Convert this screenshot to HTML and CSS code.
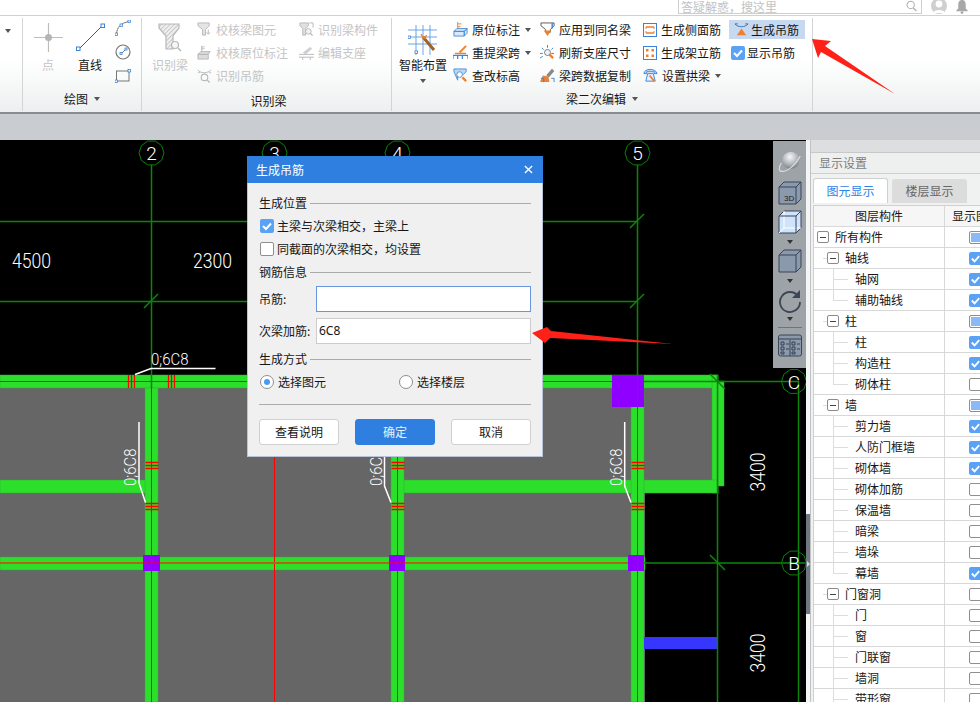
FILE: index.html
```html
<!DOCTYPE html>
<html lang="zh">
<head>
<meta charset="utf-8">
<title>生成吊筋</title>
<link rel="stylesheet" href="styles.css">
</head>
<body>
<div class="app">
  <header class="topbar">
    <div class="search"><span class="search-text">答疑解惑，搜这里</span>
      <svg class="i16" viewBox="0 0 16 16"><circle cx="7" cy="6" r="4.5" fill="none" stroke="#b0b0b0" stroke-width="1.3"/><path d="M10 9.5l4 4" stroke="#b0b0b0" stroke-width="1.6"/></svg>
    </div>
    <svg class="avatar" viewBox="0 0 16 15"><circle cx="8" cy="6" r="8" fill="#cfcfcf"/><circle cx="8" cy="4" r="3.4" fill="#fff"/><path d="M2 13c1-4 11-4 12 0z" fill="#fff"/></svg>
    <svg class="bell" viewBox="0 0 14 15"><path d="M7 0c3 0 4 2.500 4 5v4l2 2v1H1v-1l2-2V5c0-2.500 1-5 4-5z" fill="#a8a8a8"/><circle cx="7" cy="13.500" r="1.500" fill="#a8a8a8"/></svg>
  </header>

  <section class="ribbon">
    <div class="group g-first"><span class="caret first-caret"></span></div>

    <div class="group g-draw">
      <div class="group-body">
        <div class="big w30 ml10">
          <svg class="bigicon" viewBox="0 0 29 29"><path d="M14.500 0v29M0 14.500h29" stroke="#bdbdbd" stroke-width="1.200"/><circle cx="14.500" cy="14.500" r="3.500" fill="#b5b5b5"/></svg>
          <span class="off">点</span>
        </div>
        <div class="big w30 ml12">
          <svg class="bigicon" viewBox="0 0 29 29"><path d="M3 26L26 3" stroke="#555" stroke-width="1"/><rect x="0.500" y="24" width="3.500" height="3.500" fill="#fff" stroke="#3b82d8"/><rect x="25" y="1" width="3.500" height="3.500" fill="#fff" stroke="#3b82d8"/></svg>
          <span>直线</span>
        </div>
        <div class="smalls">
          <svg class="i16" viewBox="0 0 16 16"><path d="M1.500 14C2 7 6 3 14 1.500" fill="none" stroke="#777"/><rect x="0" y="13" width="2.500" height="2.500" fill="#fff" stroke="#3b82d8" stroke-width=".8"/><rect x="5" y="4" width="2.500" height="2.500" fill="#fff" stroke="#3b82d8" stroke-width=".8"/><rect x="13" y="0" width="2.500" height="2.500" fill="#fff" stroke="#3b82d8" stroke-width=".8"/></svg>
          <svg class="i16" viewBox="0 0 16 16"><circle cx="8" cy="8" r="7" fill="none" stroke="#777" stroke-width="1.200"/><path d="M6.500 9.500l4-4" stroke="#777"/><rect x="5" y="8.500" width="2" height="2" fill="#fff" stroke="#3b82d8" stroke-width=".8"/><rect x="10" y="4" width="2" height="2" fill="#fff" stroke="#3b82d8" stroke-width=".8"/></svg>
          <svg class="i16" viewBox="0 0 16 16"><rect x="1.500" y="3" width="12.500" height="10" fill="none" stroke="#777"/><rect x="0" y="12" width="2.500" height="2.500" fill="#fff" stroke="#3b82d8" stroke-width=".8"/><rect x="13" y="1.500" width="2.500" height="2.500" fill="#fff" stroke="#3b82d8" stroke-width=".8"/></svg>
        </div>
      </div>
      <div class="group-label">绘图<span class="caret"></span></div>
    </div>

    <div class="group g-recog">
      <div class="group-body">
        <div class="big w36 ml10">
          <svg class="bigicon recog-icon" viewBox="0 0 24 29">
            <defs><pattern id="hatch" width="3" height="3" patternUnits="userSpaceOnUse" patternTransform="rotate(-45)"><rect width="3" height="3" fill="#f0f0f0"/><rect width="3" height="1" fill="#c8c8c8"/></pattern></defs>
            <path d="M1 1h20v4l-6 8v13H8V13L1 5z" fill="url(#hatch)" stroke="#b8b8b8" stroke-width="1.200"/><circle cx="17" cy="22" r="3.500" fill="#f5f5f5" stroke="#b8b8b8" stroke-width="1.200"/><path d="M20 25l3 3" stroke="#b8b8b8" stroke-width="1.500"/>
          </svg>
          <span class="off">识别梁</span>
        </div>
        <div class="col w102 ml9">
          <div class="item off"><svg class="i15" viewBox="0 0 16 16"><path d="M1 1h12v3l-4 4v6H6V8L1 4z" fill="#e4e4e4" stroke="#b8b8b8"/><path d="M12 8v5l-2-2m2 2l2-2" fill="none" stroke="#b8b8b8"/></svg>校核梁图元</div>
          <div class="item off"><svg class="i15" viewBox="0 0 16 16"><path d="M5 1v6M5 2h3M5 4h3" stroke="#b8b8b8"/><path d="M1 10l3-3h10l-2 3zM1 10h11v5H1z" fill="#dcdcdc" stroke="#b8b8b8"/></svg>校核原位标注</div>
          <div class="item off"><svg class="i15" viewBox="0 0 16 16"><path d="M1 2c2 4 11 4 14 0M1 5h2M13 5h2" fill="none" stroke="#b8b8b8"/><circle cx="8" cy="10" r="3.500" fill="none" stroke="#b8b8b8" stroke-width="1.200"/><path d="M11 13l2.500 2.500" stroke="#b8b8b8" stroke-width="1.400"/></svg>识别吊筋</div>
        </div>
        <div class="col">
          <div class="item off"><svg class="i15" viewBox="0 0 16 16"><path d="M1 1h9v3L7 7v7H4V7L1 4z" fill="#e0e0e0" stroke="#b8b8b8"/><path d="M11 1h4v5" fill="none" stroke="#b8b8b8"/><circle cx="10" cy="10" r="3" fill="#f2f2f2" stroke="#b8b8b8"/><path d="M12 12l2.500 2.500" stroke="#b8b8b8" stroke-width="1.400"/></svg>识别梁构件</div>
          <div class="item off"><svg class="i15" viewBox="0 0 16 16"><path d="M4 8l8-6 2 2-7 6z" fill="#cfcfcf"/><path d="M0 10h16M0 13h16M4 13v3M12 13v3" stroke="#b8b8b8"/></svg>编辑支座</div>
        </div>
      </div>
      <div class="group-label label-low">识别梁</div>
    </div>

    <div class="group g-edit">
      <div class="group-body">
        <div class="big w48 ml7">
          <svg class="smart" viewBox="0 0 30 30"><path d="M0 5h29M0 12h29M0 19h29M8 0v30M15 0v30M22 0v30" stroke="#5b9be0" stroke-width=".9"/><path d="M15 12l11 13" stroke="#a0622a" stroke-width="3"/><path d="M13 9l2 4 3-2-1 3" stroke="#f08030" stroke-width="1.300" fill="none"/><rect x="0" y="11" width="2.500" height="2.500" fill="#fff" stroke="#3b82d8" stroke-width=".8"/><rect x="7" y="26" width="2.500" height="2.500" fill="#fff" stroke="#3b82d8" stroke-width=".8"/></svg>
          <span class="smart-text">智能布置</span>
          <span class="caret smart-caret"></span>
        </div>
        <div class="col w87 ml6">
          <div class="item"><svg class="i15" viewBox="0 0 16 16"><path d="M5 0v8M5 2h4M5 5h3" stroke="#f08030"/><path d="M1 10l3-3h11l-3 3zM1 10h11v5H1zM12 10l3-3v5l-3 3z" fill="#dbe8f8" stroke="#4a8fd8"/></svg>原位标注<span class="caret item-caret"></span></div>
          <div class="item"><svg class="i15" viewBox="0 0 16 16"><path d="M7 8l7-7" stroke="#f08030" stroke-width="2"/><path d="M2 9h12" stroke="#f08030" stroke-width="1.500"/><path d="M0 11h16v4M0 11v4M5 11v4M10 11v4" fill="none" stroke="#3b82d8" stroke-width="1.300"/></svg>重提梁跨<span class="caret item-caret"></span></div>
          <div class="item"><svg class="i15" viewBox="0 0 16 16"><path d="M1 1h13v3l-3 3H5v6L1 4z" fill="#bcd6f4" stroke="#4a8fd8"/><circle cx="7" cy="7" r="3" fill="#fff" stroke="#4a8fd8"/><path d="M10 10l4 4" stroke="#f08030" stroke-width="2.500"/></svg>查改标高</div>
        </div>
        <div class="col w103">
          <div class="item"><svg class="i15" viewBox="0 0 16 16"><path d="M1 1h14v3l-4 4v3H6V8L1 4z" fill="#fff" stroke="#555"/><path d="M4 9h8l-4 6z" fill="#f08030"/><path d="M13 1v6" stroke="#3b82d8" stroke-width="1.500"/></svg>应用到同名梁</div>
          <div class="item"><svg class="i15" viewBox="0 0 16 16"><path d="M8 0v3M2 3l2 2M14 3l-2 2M0 9h3M0 14l3-2M12 9h3" stroke="#3b82d8"/><circle cx="8" cy="8" r="3.200" fill="#eaf2fc" stroke="#777"/><path d="M10 10l4 4" stroke="#f08030" stroke-width="2.500"/></svg>刷新支座尺寸</div>
          <div class="item"><svg class="i15" viewBox="0 0 16 16"><path d="M8 9l6-7" stroke="#888" stroke-width="3.500"/><path d="M3 8l6 1 1 6H0z" fill="#f08030"/><path d="M1 11h3v4M12 11h3v4" fill="none" stroke="#3b82d8"/></svg>梁跨数据复制</div>
        </div>
        <div class="col w86">
          <div class="item tight"><svg class="i14" viewBox="0 0 14 14"><rect x=".5" y=".5" width="13" height="13" fill="#fff" stroke="#3b82d8"/><path d="M3 4h8M3 10h8" stroke="#f08030" stroke-width="1.400"/><path d="M3 4v2M11 4v2M3 10V8M11 10V8" stroke="#f08030"/></svg>生成侧面筋</div>
          <div class="item tight"><svg class="i14" viewBox="0 0 14 14"><rect x=".5" y=".5" width="13" height="13" fill="#fff" stroke="#3b82d8"/><path d="M3 3h2.500v2.500H3zM8.500 3H11v2.500H8.500zM3 8.500h2.500V11H3zM8.500 8.500H11V11H8.500z" fill="#f08030"/></svg>生成架立筋</div>
          <div class="item tight"><svg class="i15" viewBox="0 0 16 16"><path d="M1 6c0-6 13-6 14 0h-3V4H4v2z" fill="#bcd6f4" stroke="#3b82d8"/><path d="M3 14l2-8h6l2 8z" fill="#eaf2fc" stroke="#3b82d8"/><path d="M7 8l5 6" stroke="#f08030" stroke-width="2"/></svg>设置拱梁<span class="caret item-caret"></span></div>
        </div>
        <div class="col">
          <div class="item active"><svg class="i15" viewBox="0 0 16 16"><path d="M1 2c3 4 11 4 14 0" fill="none" stroke="#3b6fa8"/><path d="M1 2h3M12 2h3" stroke="#3b6fa8"/><path d="M3 14l5-7 5 7z" fill="#f08030"/></svg>生成吊筋</div>
          <div class="item show"><span class="check"><svg viewBox="0 0 14 14"><path d="M3 7l3 3 5-5.500" fill="none" stroke="#fff" stroke-width="2"/></svg></span>显示吊筋</div>
        </div>
      </div>
      <div class="group-label">梁二次编辑<span class="caret"></span></div>
    </div>
  </section>

  <div class="band"></div>

  <main class="work">
    <div class="canvas">
      <svg class="cad" viewBox="0 140 806 562">
        <defs>
          <polygon id="axis" class="bubble" points="12.500,0 10.100,7.350 3.860,11.900 -3.860,11.900 -10.100,7.350 -12.500,0 -10.100,-7.350 -3.860,-11.900 3.860,-11.900 10.100,-7.350"/>
          <g id="hh"><path class="hang" d="M-6 .5H7M-6 3.500H7M-6 6.500H7"/></g>
          <g id="hv"><path class="hang" d="M.5 0V13M3.500 0V13M6.500 0V13"/></g>
        </defs>
        <rect class="slab" x="0" y="375" width="645" height="327"/>
        <rect class="slab" x="644" y="375" width="70" height="105"/>

        <rect class="beam" x="0" y="375" width="718" height="13"/>
        <rect class="beam" x="712" y="375" width="6" height="118"/>
        <rect class="beam" x="718" y="381" width="6" height="105"/>
        <rect class="beam" x="0" y="480" width="146" height="13"/>
        <rect class="beam" x="403" y="480" width="315" height="13"/>
        <rect class="beam" x="0" y="557" width="645" height="13"/>
        <rect class="beam" x="145" y="388" width="13" height="314"/>
        <rect class="beam" x="391" y="388" width="13" height="314"/>
        <rect class="beam" x="631" y="388" width="13" height="314"/>
        <rect class="blue" x="644" y="637" width="74" height="12"/>

        <path class="grid" d="M151.500 165V388M397.500 165V388M274.500 165V388M637.500 165V388"/>
        <path class="grid" d="M0 221.500H637M0 301.500H637M644 381.500H798M644 563H806M717.500 375V702M798.500 381V702"/>
        <path class="grid" d="M144 308l14-14M630 228l14-14M630 308l14-14M710 374l15 15M710 555l15 15"/>

        <path class="red" d="M0 381.500H637M151.500 388V702M397.500 388V702M637.500 375V702M274.500 456V702"/>
        <path class="mid" d="M0 563H631"/>

        <rect class="col-p" x="612" y="375" width="32" height="32"/>
        <rect class="col-p" x="143" y="555" width="17" height="16"/>
        <rect class="col-p" x="389" y="555" width="16" height="16"/>
        <rect class="col-p" x="628" y="555" width="16" height="16"/>
        <path class="red" d="M637.500 375V407M637.500 555V571M151.500 555V571M397.500 555V571M389 563H405M143 563H160"/>

        <use href="#hv" x="128" y="375"/>
        <use href="#hv" x="168" y="375"/>
        <use href="#hh" x="151.500" y="462"/>
        <use href="#hh" x="151.500" y="503"/>
        <use href="#hh" x="397.500" y="462"/>
        <use href="#hh" x="397.500" y="503"/>
        <use href="#hh" x="637.500" y="462"/>
        <use href="#hh" x="637.500" y="503"/>

        <path class="lead" d="M135 374.500L151 368.500H215.500"/>
        <path class="lead" d="M139 422V483L145.500 502.500"/>
        <path class="lead" d="M384.500 422V486L391 502.500"/>
        <path class="lead" d="M624.700 422V486L631 502.500"/>

        <use href="#axis" x="151.500" y="153"/>
        <use href="#axis" x="274.500" y="153"/>
        <use href="#axis" x="397.500" y="153"/>
        <use href="#axis" x="637.500" y="153"/>
        <use href="#axis" x="794" y="381.500"/>
        <use href="#axis" x="794" y="563"/>

        <text class="t-axis" x="151.500" y="160">2</text>
        <text class="t-axis" x="274.500" y="160">3</text>
        <text class="t-axis" x="397.500" y="160">4</text>
        <text class="t-axis" x="637.500" y="160">5</text>
        <text class="t-axis" x="794" y="388.500">C</text>
        <text class="t-axis" x="794" y="570">B</text>

        <text class="t-dim" transform="translate(12 268) scale(.88 1)">4500</text>
        <text class="t-dim" transform="translate(193 268) scale(.88 1)">2300</text>
        <text class="t-dim" transform="translate(765 491.500) rotate(-90) scale(.88 1)">3400</text>
        <text class="t-dim" transform="translate(765 672.500) rotate(-90) scale(.88 1)">3400</text>

        <text class="t-note" transform="translate(151 365) scale(.88 1)">0;6C8</text>
        <text class="t-note" transform="translate(136 486) rotate(-90) scale(.88 1)">0;6C8</text>
        <text class="t-note" transform="translate(382 486) rotate(-90) scale(.88 1)">0;6C8</text>
        <text class="t-note" transform="translate(622 486) rotate(-90) scale(.88 1)">0;6C8</text>
      </svg>

      <div class="tools">
        <svg class="tool" viewBox="0 0 28 26">
          <defs><radialGradient id="ball" cx=".45" cy=".3" r=".8"><stop offset="0" stop-color="#f6f7f9"/><stop offset=".6" stop-color="#a9aeb4"/><stop offset="1" stop-color="#5e6670"/></radialGradient></defs>
          <circle cx="15" cy="11" r="10" fill="url(#ball)"/>
          <path d="M4 14C0 20 1 24 5 24c5 0 15-6 21-18" fill="none" stroke="#d8dbde" stroke-width="1.300"/>
        </svg>
        <svg class="tool t7" viewBox="0 0 24 24"><path d="M1 6l5-5h17v17l-5 5H1z" fill="#8b99ad" stroke="#384558"/><path d="M1 6h17v17M18 6l5-5" fill="none" stroke="#384558"/><text class="t-3d" x="6" y="20">3D</text></svg>
        <svg class="tool t5" viewBox="0 0 24 24"><path d="M1 6l5-5h17v17l-5 5H1z" fill="#cfe4fb" stroke="#384558"/><path d="M6 1v17H23M6 18l-5 5" fill="none" stroke="#fff"/><path d="M1 6h17v17M18 6l5-5" fill="none" stroke="#384558"/></svg>
        <span class="caret t-caret"></span>
        <svg class="tool t5" viewBox="0 0 24 24"><path d="M1 6l5-5h17v17l-5 5H1z" fill="#8b99ad" stroke="#384558"/><path d="M1 6h17v17M18 6l5-5" fill="none" stroke="#384558"/></svg>
        <span class="caret t-caret"></span>
        <svg class="tool t6" viewBox="0 0 24 24"><path d="M20 7A10 10 0 1 0 22 13" fill="none" stroke="#3c4654" stroke-width="1.800"/><path d="M22 1v8h-8z" fill="#3c4654"/></svg>
        <span class="caret t-caret4"></span>
        <span class="tool-sep"></span>
        <svg class="tool" viewBox="0 0 24 24"><rect x=".5" y="2" width="23" height="21" rx="2" fill="#8b99ad" stroke="#384558"/><path d="M1 6h22M3 9h3v3H3zM3 14h3v3H3zM3 19h3v2H3zM14 9h3v3h-3zM14 14h3v3h-3zM14 19h3v2h-3zM8 11h3M8 16h3M19 11h3M19 16h3M12 7v16" fill="none" stroke="#2d3848" stroke-width=".9"/></svg>
      </div>

      <div class="dialog">
        <div class="dlg-title"><span>生成吊筋</span><svg class="dlg-x" viewBox="0 0 10 10"><path d="M1 1l8 8M9 1L1 9" stroke="#fff" stroke-width="1.500"/></svg></div>
        <div class="dlg-body">
          <div class="sec"><span>生成位置</span><i></i></div>
          <div class="opt"><span class="check"><svg viewBox="0 0 14 14"><path d="M3 7l3 3 5-5.500" fill="none" stroke="#fff" stroke-width="2"/></svg></span>主梁与次梁相交，主梁上</div>
          <div class="opt"><span class="box"></span>同截面的次梁相交，均设置</div>
          <div class="sec sec2"><span>钢筋信息</span><i></i></div>
          <div class="field f1"><label>吊筋:</label><div class="input focus"></div></div>
          <div class="field"><label>次梁加筋:</label><div class="input">6C8</div></div>
          <div class="sec sec3"><span>生成方式</span><i></i></div>
          <div class="radios">
            <div class="radio-item wide"><span class="radio on"></span>选择图元</div>
            <div class="radio-item"><span class="radio"></span>选择楼层</div>
          </div>
          <div class="hr"></div>
          <div class="btns"><div class="btn">查看说明</div><div class="btn primary">确定</div><div class="btn">取消</div></div>
        </div>
      </div>
    </div>

    <div class="gutter"><div class="handle"><span class="handle-arrow"></span></div></div>

    <aside class="panel">
      <div class="p-strip"></div>
      <div class="p-title">显示设置</div>
      <div class="tabs"><div class="tab cur">图元显示</div><div class="tab">楼层显示</div></div>
      <div class="tree">
        <div class="row head"><div class="c1">图层构件</div><div class="c2">显示图元</div></div>
        <div class="row l0"><div class="c1"><b class="minus"></b>所有构件</div><div class="c2"><span class="box part"></span></div></div>
        <div class="row l1"><div class="c1"><b class="minus"></b>轴线</div><div class="c2"><span class="ck"><svg viewBox="0 0 14 14"><path d="M3 7l3 3 5-5.500" fill="none" stroke="#fff" stroke-width="2"/></svg></span></div></div>
        <div class="row l2"><div class="c1">轴网</div><div class="c2"><span class="ck"><svg viewBox="0 0 14 14"><path d="M3 7l3 3 5-5.500" fill="none" stroke="#fff" stroke-width="2"/></svg></span></div></div>
        <div class="row l2 last"><div class="c1">辅助轴线</div><div class="c2"><span class="ck"><svg viewBox="0 0 14 14"><path d="M3 7l3 3 5-5.500" fill="none" stroke="#fff" stroke-width="2"/></svg></span></div></div>
        <div class="row l1"><div class="c1"><b class="minus"></b>柱</div><div class="c2"><span class="box part"></span></div></div>
        <div class="row l2"><div class="c1">柱</div><div class="c2"><span class="ck"><svg viewBox="0 0 14 14"><path d="M3 7l3 3 5-5.500" fill="none" stroke="#fff" stroke-width="2"/></svg></span></div></div>
        <div class="row l2"><div class="c1">构造柱</div><div class="c2"><span class="ck"><svg viewBox="0 0 14 14"><path d="M3 7l3 3 5-5.500" fill="none" stroke="#fff" stroke-width="2"/></svg></span></div></div>
        <div class="row l2 last"><div class="c1">砌体柱</div><div class="c2"><span class="box"></span></div></div>
        <div class="row l1"><div class="c1"><b class="minus"></b>墙</div><div class="c2"><span class="box part"></span></div></div>
        <div class="row l2"><div class="c1">剪力墙</div><div class="c2"><span class="ck"><svg viewBox="0 0 14 14"><path d="M3 7l3 3 5-5.500" fill="none" stroke="#fff" stroke-width="2"/></svg></span></div></div>
        <div class="row l2"><div class="c1">人防门框墙</div><div class="c2"><span class="ck"><svg viewBox="0 0 14 14"><path d="M3 7l3 3 5-5.500" fill="none" stroke="#fff" stroke-width="2"/></svg></span></div></div>
        <div class="row l2"><div class="c1">砌体墙</div><div class="c2"><span class="ck"><svg viewBox="0 0 14 14"><path d="M3 7l3 3 5-5.500" fill="none" stroke="#fff" stroke-width="2"/></svg></span></div></div>
        <div class="row l2"><div class="c1">砌体加筋</div><div class="c2"><span class="box"></span></div></div>
        <div class="row l2"><div class="c1">保温墙</div><div class="c2"><span class="box"></span></div></div>
        <div class="row l2"><div class="c1">暗梁</div><div class="c2"><span class="box"></span></div></div>
        <div class="row l2"><div class="c1">墙垛</div><div class="c2"><span class="box"></span></div></div>
        <div class="row l2 last"><div class="c1">幕墙</div><div class="c2"><span class="ck"><svg viewBox="0 0 14 14"><path d="M3 7l3 3 5-5.500" fill="none" stroke="#fff" stroke-width="2"/></svg></span></div></div>
        <div class="row l1"><div class="c1"><b class="minus"></b>门窗洞</div><div class="c2"><span class="box"></span></div></div>
        <div class="row l2"><div class="c1">门</div><div class="c2"><span class="box"></span></div></div>
        <div class="row l2"><div class="c1">窗</div><div class="c2"><span class="box"></span></div></div>
        <div class="row l2"><div class="c1">门联窗</div><div class="c2"><span class="box"></span></div></div>
        <div class="row l2"><div class="c1">墙洞</div><div class="c2"><span class="box"></span></div></div>
        <div class="row l2"><div class="c1">带形窗</div><div class="c2"><span class="box"></span></div></div>
      </div>
    </aside>
  </main>

  <svg class="arrows" viewBox="0 0 980 702">
    <path d="M812 39L831 41L825 46L895 94L821 52L818 58Z"/>
    <path d="M532 333L547 327L551 331L673 344L550 338L545 343Z"/>
  </svg>
</div>
</body>
</html>
```
FILE: styles.css
```css
* { box-sizing: border-box; }
html, body { margin: 0; padding: 0; }
body {
  width: 980px;
  height: 702px;
  overflow: hidden;
  background: #fff;
  font: 12px/16px "Noto Sans CJK SC", "Liberation Sans", sans-serif;
  color: #161616;
}
.app { position: relative; width: 980px; height: 702px; display: flex; flex-direction: column; overflow: hidden; }

/* top bar */
.topbar { height: 15px; flex: none; display: flex; align-items: flex-start; padding-left: 678px; background: #fff; overflow: hidden; }
.search { width: 244px; height: 14px; border: 1px solid #cfcfcf; border-top: 0; display: flex; align-items: center; justify-content: space-between; padding: 0 3px 0 2px; }
.search-text { color: #c2c2c2; line-height: 13px; }
.search .i16 { width: 13px; height: 13px; }
.avatar { width: 16px; height: 15px; margin-left: 9px; }
.bell { width: 14px; height: 14px; margin-left: 8px; }

/* ribbon */
.ribbon { height: 99px; flex: none; display: flex; border-top: 1px solid #d2d2d2; border-bottom: 2px solid #8a8c8e; background: linear-gradient(#fff 0, #fff 45%, #edf0f0 100%); }
.group { margin: 2px 0 1px; border-right: 1px solid #d2d5d5; display: flex; flex-direction: column; }
.g-first { width: 23px; }
.g-draw { width: 119px; }
.g-recog { width: 250px; }
.g-edit { width: 421px; }
.group-body { height: 70px; display: flex; }
.group-label { height: 24px; display: flex; align-items: center; justify-content: center; gap: 6px; }
.label-low { padding: 4px 0 0 4px; }
.caret { display: inline-block; width: 0; height: 0; border: 3.500px solid transparent; border-top: 4px solid #555; border-bottom: 0; }
.first-caret { margin: 11px 0 0 5px; }
.off { color: #c4c4c4; }

.big { display: flex; flex-direction: column; align-items: center; padding-top: 5px; }
.big span:not(.caret) { margin-top: 5px; line-height: 16px; white-space: nowrap; }
.bigicon { width: 29px; height: 29px; flex: none; }
.recog-icon { width: 24px; }
.smart { width: 30px; height: 30px; flex: none; margin-top: 2px; }
.big span.smart-text { margin-top: 2px; }
.smart-caret { margin-top: 6px; }
.w30 { width: 30px; }
.w36 { width: 36px; }
.w48 { width: 48px; }
.ml6 { margin-left: 6px; }
.ml7 { margin-left: 7px; }
.ml9 { margin-left: 9px; }
.ml10 { margin-left: 10px; }
.ml12 { margin-left: 12px; }
.smalls { margin-left: 10px; display: flex; flex-direction: column; padding-top: 2px; gap: 8px; }
.col { display: flex; flex-direction: column; flex: none; }
.w102 { width: 102px; }
.w87 { width: 87px; }
.w103 { width: 103px; }
.w86 { width: 86px; }
.item { height: 23px; display: flex; align-items: center; white-space: nowrap; }
.item > svg { margin-right: 4px; flex: none; }
.item.tight > svg { margin-right: 4px; }
.item-caret { margin-left: 5px; }
.i16 { width: 16px; height: 16px; display: block; }
.i15 { width: 15px; height: 15px; }
.i14 { width: 14px; height: 14px; }
.active { height: 19px; margin: 2px 0; width: 76px; padding-left: 5px; background: #c6d9f1; }
.active > svg { margin-right: 2px; }
.show { padding-left: 2px; }
.show .check { margin-right: 2px; }

.check, .ck { display: inline-block; flex: none; background: #5aa2f6; border-radius: 2px; }
.check { width: 14px; height: 14px; margin-right: 3px; }
.check svg, .ck svg { display: block; width: 100%; height: 100%; }
.ck { width: 13px; height: 13px; }

.band { height: 26px; flex: none; background: #c9ccd0; }

/* work area */
.work { flex: 1; min-height: 0; display: flex; }
.canvas { position: relative; width: 806px; flex: none; background: #000; overflow: hidden; }
.cad { display: block; width: 806px; height: 562px; }
.slab { fill: #666; }
.beam { fill: #2bdf2b; stroke: #3aa83a; stroke-width: .5; }
.blue { fill: #3636ff; }
.col-p { fill: #8f00ff; }
.grid { stroke: #0b860b; stroke-width: 1.500; fill: none; }
.red { stroke: #f00; stroke-width: 1; fill: none; }
.mid { stroke: #b4640f; stroke-width: 2; fill: none; }
.hang { stroke: #f00; stroke-width: 1.300; fill: none; }
.lead { stroke: #fff; stroke-width: 1.500; fill: none; }
.bubble { fill: none; stroke: #0a800a; stroke-width: 1; }
.t-axis { fill: #fff; font: 300 19px Roboto, "Liberation Sans", sans-serif; text-anchor: middle; }
.t-dim { fill: #fff; font: 300 20px Roboto, "Liberation Sans", sans-serif; }
.t-note { fill: #fff; font: 300 17px Roboto, "Liberation Sans", sans-serif; }
.t-3d { fill: #222; font: 8px "Liberation Sans", sans-serif; }

/* view toolbar */
.tools { position: absolute; left: 773px; top: 1px; width: 33px; height: 227px; background: #9ea3a8; display: flex; flex-direction: column; align-items: center; padding-top: 9px; }
.tool { width: 24px; height: 24px; flex: none; }
.t7 { margin-top: 7px; }
.t5 { margin-top: 5px; }
.t6 { margin-top: 6px; }
.t-caret { margin-top: 6px; border-top-color: #333; }
.t-caret4 { display: inline-block; flex: none; width: 0; height: 0; margin-top: 4px; border: 3.500px solid transparent; border-top: 4px solid #333; border-bottom: 0; }
.tool-sep { width: 24px; height: 1px; background: #6f747a; margin: 6px 0 5px; flex: none; }

/* dialog */
.dialog { position: absolute; left: 247px; top: 16px; width: 296px; height: 301px; background: #f0f0f0; border: 1px solid #b7c3d6; border-top: 0; }
.dlg-title { height: 27px; margin: 0 -1px; background: #2e7fe0; color: #fff; display: flex; align-items: center; justify-content: space-between; padding: 0 10px 0 9px; }
.dlg-x { width: 9px; height: 9px; }
.dlg-body { padding: 12px 11px 0; }
.sec { height: 16px; display: flex; align-items: center; gap: 3px; }
.sec i { flex: 1; height: 1px; background: #ababab; }
.sec2 { margin-top: 4px; }
.sec3 { margin-top: 7px; }
.opt { height: 23px; display: flex; align-items: center; padding-left: 1px; }
.sec + .opt { margin-top: 3px; }
.box { display: inline-block; width: 14px; height: 14px; flex: none; background: #fff; border: 1px solid #8f8f8f; border-radius: 2px; margin-right: 3px; }
.field { display: flex; align-items: center; margin-top: 6px; }
.field label { width: 57px; flex: none; }
.input { flex: 1; height: 26px; background: #fff; border: 1px solid #ccc; padding: 0 2px; line-height: 24px; font-family: "Noto Sans", "Noto Sans CJK SC", sans-serif; }
.focus { border-color: #6a96e0; }
.radios { display: flex; margin-top: 3px; height: 23px; padding-left: 1px; }
.radio-item { display: flex; align-items: center; gap: 4px; }
.wide { width: 139px; }
.radio { width: 14px; height: 14px; border: 1px solid #8f8f8f; border-radius: 50%; background: #fff; display: flex; align-items: center; justify-content: center; }
.radio.on::after { content: ""; width: 6px; height: 6px; border-radius: 50%; background: #4a9af5; }
.hr { height: 1px; background: #ababab; margin-top: 11px; }
.btns { display: flex; justify-content: space-between; margin-top: 14px; }
.btn { width: 80px; height: 26px; background: #fff; border: 1px solid #d0d0d0; border-radius: 3px; text-align: center; line-height: 24px; }
.primary { background: #2e7fe0; border-color: #2e7fe0; color: #e8f0fa; }

/* gutter */
.gutter { width: 5px; flex: none; background: #f4f5f6; border-right: 1px solid #c0c2c4; padding-top: 374px; }
.handle { width: 4px; height: 100px; background: #6f7780; display: flex; align-items: center; }
.handle-arrow { width: 0; height: 0; border: 3px solid transparent; border-left: 3px solid #d5d8db; border-right: 0; margin-left: 1px; }

/* panel */
.panel { flex: 1; min-width: 0; overflow: hidden; background: #f0f1f1; }
.p-strip { height: 13px; background: #dcdee0; border-bottom: 1px solid #c8c8c8; }
.p-title { height: 21px; line-height: 20px; padding-left: 8px; color: #7d7d7d; background: #eef0f0; border-bottom: 1px solid #cfcfcf; }
.tabs { height: 31px; display: flex; padding: 4px 0 0 2px; gap: 4px; }
.tab { width: 75px; height: 24px; text-align: center; line-height: 24px; background: #dcdcdc; color: #666; border-radius: 3px 3px 0 0; margin-top: 1px; }
.tab.cur { background: #fff; color: #2e84e8; height: 25px; margin-top: 0; border: 1px solid #d0d0d0; border-bottom: 0; }
.tree { margin-left: 2px; width: 200px; border-left: 1px solid #d0d0d0; background: #fff; }
.row { height: 21px; display: flex; border-bottom: 1px solid #d8d8d8; background: #fff; position: relative; }
.head { border-top: 1px solid #d0d0d0; height: 22px; background: #f6f6f6; }
.head .c1 { justify-content: center; padding: 0; }
.head .c2 { padding-left: 7px; }
.c1 { width: 131px; flex: none; border-right: 1px solid #d8d8d8; display: flex; align-items: center; white-space: nowrap; }
.c2 { flex: 1; display: flex; align-items: center; padding-left: 24px; white-space: nowrap; }
.c2 .box { width: 13px; height: 13px; margin: 0; }
.c2 .part { background: #8ab9f7; box-shadow: inset 0 0 0 1px #fff; }
.minus { width: 12px; height: 12px; border: 1px solid #8a8a8a; border-radius: 2px; background: #fff; display: inline-flex; align-items: center; justify-content: center; margin-right: 6px; font-weight: normal; flex: none; }
.minus::after { content: ""; width: 6px; height: 1px; background: #444; }
.l0 .c1 { padding-left: 3px; }
.l1 .c1 { padding-left: 13px; }
.l2 .c1 { padding-left: 41px; }
.l1 .c1::before { content: ""; position: absolute; left: 9px; top: 10px; width: 4px; height: 1px; background: #ddd; }
.l2 .c1::before { content: ""; position: absolute; left: 19px; top: 10px; width: 15px; height: 1px; background: #ddd; }
.l2 .c1::after { content: ""; position: absolute; left: 19px; top: 0; width: 1px; height: 21px; background: #ddd; }
.l2.last .c1::after { height: 11px; }

/* annotation arrows */
.arrows { position: absolute; left: 0; top: 0; width: 980px; height: 702px; pointer-events: none; }
.arrows path { fill: #ff2018; }
```
